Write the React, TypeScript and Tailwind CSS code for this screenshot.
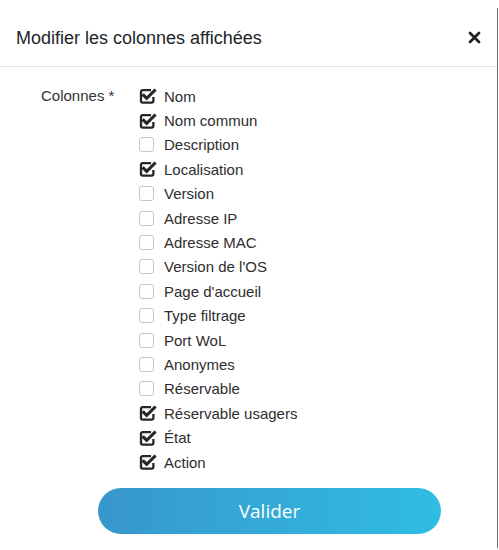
import React, { useState } from 'react';

type Column = { key: string; label: string; checked: boolean };

const INITIAL_COLUMNS: Column[] = [
  { key: 'nom', label: 'Nom', checked: true },
  { key: 'nomCommun', label: 'Nom commun', checked: true },
  { key: 'description', label: 'Description', checked: false },
  { key: 'localisation', label: 'Localisation', checked: true },
  { key: 'version', label: 'Version', checked: false },
  { key: 'ip', label: 'Adresse IP', checked: false },
  { key: 'mac', label: 'Adresse MAC', checked: false },
  { key: 'os', label: "Version de l'OS", checked: false },
  { key: 'accueil', label: "Page d'accueil", checked: false },
  { key: 'filtrage', label: 'Type filtrage', checked: false },
  { key: 'wol', label: 'Port WoL', checked: false },
  { key: 'anonymes', label: 'Anonymes', checked: false },
  { key: 'reservable', label: 'Réservable', checked: false },
  { key: 'reservableUsagers', label: 'Réservable usagers', checked: true },
  { key: 'etat', label: 'État', checked: true },
  { key: 'action', label: 'Action', checked: true },
];

const CheckIcon: React.FC<{ checked: boolean }> = ({ checked }) =>
  checked ? (
    <svg width="18" height="16" viewBox="0 0 18 16" className="shrink-0">
      <path
        d="M12 2.2H3.6A1.6 1.6 0 0 0 2 3.8v9.2a1.6 1.6 0 0 0 1.6 1.6h9.2a1.6 1.6 0 0 0 1.6-1.6V9"
        fill="none"
        stroke="#262626"
        strokeWidth="2.3"
        strokeLinejoin="round"
      />
      <path
        d="M4.7 7.4l3 3 7.8-7.8"
        fill="none"
        stroke="#262626"
        strokeWidth="3.1"
        strokeLinecap="square"
      />
    </svg>
  ) : (
    <span className="block w-[15px] h-[15px] mr-[3px] shrink-0 rounded-[3px] border border-[#c6c6c6] bg-white" />
  );

const App: React.FC = () => {
  const [columns, setColumns] = useState<Column[]>(INITIAL_COLUMNS);

  const toggle = (key: string) => {
    setColumns(prev => prev.map(c => (c.key === key ? { ...c, checked: !c.checked } : c)));
  };

  return (
    <div className="w-[499px] h-[550px] bg-white flex overflow-hidden" style={{ fontFamily: '"Liberation Sans", Arial, sans-serif' }}>
      <div className="w-[497px] flex flex-col">
        {/* header */}
        <div className="h-[67px] shrink-0 flex items-center justify-between pl-4 pr-[16px] pt-[9px] border-b border-[#dee2e6]">
          <h1 className="text-[18px] text-[#212529] leading-none">Modifier les colonnes affichées</h1>
          <button className="w-[14px] h-[14px] flex items-center justify-center">
            <svg width="13" height="13" viewBox="0 0 13 13">
              <path d="M2 2l9 9M11 2l-9 9" stroke="#222" strokeWidth="2.8" strokeLinecap="round" />
            </svg>
          </button>
        </div>

        {/* body */}
        <div className="pt-[17px] flex">
          <div className="w-[139px] pl-[41px] text-[15px] text-[#333] leading-[23px]">Colonnes *</div>
          <div className="flex flex-col">
            {columns.map(c => (
              <label
                key={c.key}
                onClick={() => toggle(c.key)}
                className="h-[24.4px] flex items-center gap-[7px] text-[15px] text-[#2e2e2e] cursor-pointer select-none"
              >
                <CheckIcon checked={c.checked} />
                <span className="leading-none">{c.label}</span>
              </label>
            ))}
          </div>
        </div>

        {/* footer */}
        <div className="pt-[14px] pl-[98px]">
          <button
            className="w-[343px] h-[46px] rounded-full bg-gradient-to-r from-[#3797cd] to-[#2ebde4] text-white text-[19px]"
            style={{ fontFamily: '"Open Sans", "Noto Sans", sans-serif' }}
          >
            Valider
          </button>
        </div>
      </div>
      <div className="w-px mt-[8px] mb-[2px] bg-[#6b6b6b]" />
    </div>
  );
};

export default App;
